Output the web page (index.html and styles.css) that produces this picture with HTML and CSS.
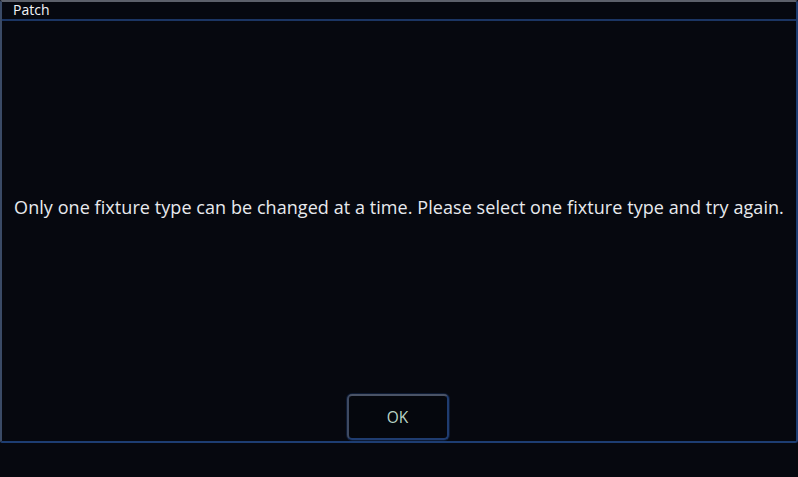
FILE: index.html
```html
<!DOCTYPE html>
<html>
<head>
<meta charset="utf-8">
<link rel="stylesheet" href="styles.css">
</head>
<body>
<div class="dialog">
  <div class="titlebar">Patch</div>
  <div class="content">
    <div class="message">Only one fixture type can be changed at a time. Please select one fixture type and try again.</div>
    <div class="actions">
      <button class="btn">OK</button>
    </div>
  </div>
</div>
</body>
</html>
```
FILE: styles.css
```css
html, body {
  margin: 0;
  padding: 0;
  background: #06080f;
  width: 798px;
  height: 477px;
  overflow: hidden;
  font-family: "Open Sans", "Noto Sans", sans-serif;
}
.dialog {
  box-sizing: border-box;
  width: 798px;
  height: 443px;
  border-top: 2px solid #5c606a;
  border-left: 2px solid #3a4a66;
  border-right: 2px solid #1d3d72;
  border-bottom: 2px solid #1d3d72;
  border-radius: 2px 3px 3px 2px;
  background: #06080f;
  display: flex;
  flex-direction: column;
}
.titlebar {
  height: 17px;
  border-bottom: 2px solid #1b3563;
  color: #f2f4f8;
  font-size: 14px;
  line-height: 16px;
  padding-left: 11px;
}
.content {
  flex: 1;
  display: flex;
  flex-direction: column;
}
.message {
  flex: 1;
  display: flex;
  align-items: center;
  justify-content: center;
  color: #e8eaee;
  font-size: 18px;
  letter-spacing: 0.065px;
  padding-top: 0;
  padding-bottom: 2px;
}
.actions {
  display: flex;
  justify-content: center;
  padding-bottom: 1px;
  padding-right: 3px;
}
.btn {
  box-sizing: border-box;
  width: 102px;
  height: 46px;
  background: #05070d;
  border: 2px solid #1f3c70;
  border-top-color: #4a5366;
  border-left-color: #3e4a62;
  border-radius: 5px;
  box-shadow: 0 0 0 1px #0d1a33;
  color: #b9d4c6;
  font-family: "Open Sans", "Noto Sans", sans-serif;
  font-size: 15.5px;
  padding: 0;
}
```
